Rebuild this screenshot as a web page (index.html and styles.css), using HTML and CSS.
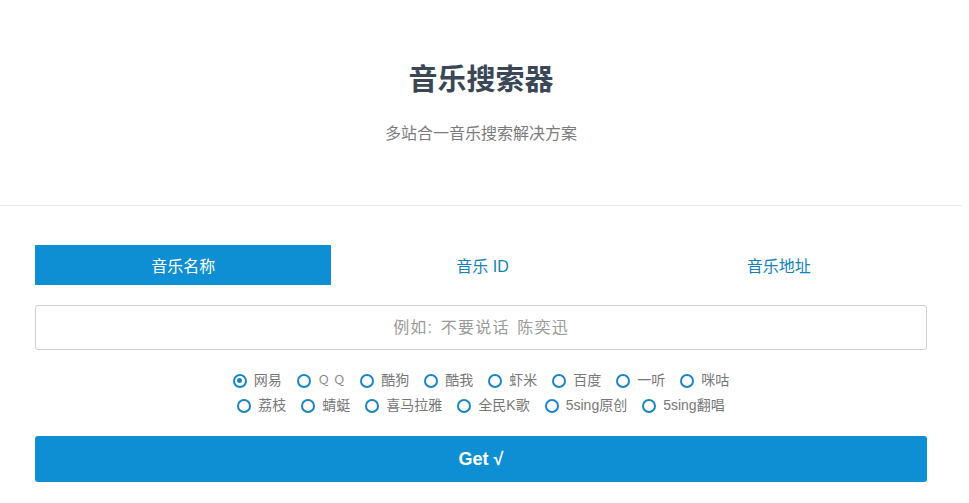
FILE: index.html
```html
<!DOCTYPE html>
<html lang="zh-CN">
<head>
    <meta charset="UTF-8">
    <meta name="viewport" content="width=device-width, initial-scale=1.0">
    <title>音乐搜索器</title>
    <link rel="stylesheet" href="styles.css">
</head>
<body>
    <div class="page">
        <header class="header">
            <h1>音乐搜索器</h1>
            <p>多站合一音乐搜索解决方案</p>
        </header>

        <div class="container">
            <div class="tabs">
                <div class="tab active">音乐名称</div>
                <div class="tab">音乐 ID</div>
                <div class="tab">音乐地址</div>
            </div>

            <input type="text" class="search-input" placeholder="例如: 不要说话 陈奕迅">

            <div class="sources">
                <div class="source-row">
                    <label class="radio checked"><span class="dot"></span>网易</label>
                    <label class="radio"><span class="dot"></span><span class="qq">Ｑ Ｑ</span></label>
                    <label class="radio"><span class="dot"></span>酷狗</label>
                    <label class="radio"><span class="dot"></span>酷我</label>
                    <label class="radio"><span class="dot"></span>虾米</label>
                    <label class="radio"><span class="dot"></span>百度</label>
                    <label class="radio"><span class="dot"></span>一听</label>
                    <label class="radio"><span class="dot"></span>咪咕</label>
                </div>
                <div class="source-row">
                    <label class="radio"><span class="dot"></span>荔枝</label>
                    <label class="radio"><span class="dot"></span>蜻蜓</label>
                    <label class="radio"><span class="dot"></span>喜马拉雅</label>
                    <label class="radio"><span class="dot"></span>全民K歌</label>
                    <label class="radio"><span class="dot"></span>5sing原创</label>
                    <label class="radio"><span class="dot"></span>5sing翻唱</label>
                </div>
            </div>

            <button class="get-button">Get √</button>
        </div>
    </div>
</body>
</html>
```

FILE: styles.css
```css
body {
    margin: 0;
    padding: 0;
    background: #fff;
    font-family: 'Liberation Sans', Arial, 'Noto Sans CJK SC', sans-serif;
    color: #333;
}

.page {
    width: 962px;
}

.header {
    text-align: center;
    padding: 62px 0 0;
    height: 143px;
    border-bottom: 1px solid #eaeaea;
}

.header h1 {
    margin: 0;
    font-size: 29px;
    line-height: 36px;
    font-weight: bold;
    color: #3a4756;
}

.header p {
    margin: 24px 0 0;
    font-size: 16px;
    line-height: 24px;
    color: #7b7b7b;
}

.container {
    padding: 39px 35px 0;
}

.tabs {
    display: flex;
    height: 40px;
}

.tab {
    flex: 1;
    display: flex;
    justify-content: center;
    align-items: center;
    font-size: 16px;
    color: #1282be;
}

.tab.active {
    background: #0f8fd3;
    color: #fff;
    margin-right: 3px;
}

.search-input {
    display: block;
    box-sizing: border-box;
    width: 100%;
    height: 45px;
    margin-top: 20px;
    padding: 0;
    border: 1px solid #cfcfcf;
    border-radius: 3px;
    text-align: center;
    font-family: inherit;
    font-size: 16px;
    letter-spacing: 1.2px;
    word-spacing: 2px;
    outline: none;
}

.search-input::placeholder {
    color: #9a9a9a;
}

.sources {
    margin-top: 18px;
}

.source-row {
    display: flex;
    justify-content: center;
    gap: 15px;
    line-height: 25px;
}

.radio {
    display: flex;
    align-items: center;
    font-size: 14px;
    color: #777;
}

.dot {
    box-sizing: border-box;
    width: 14px;
    height: 14px;
    border: 2.5px solid #1a85c6;
    border-radius: 50%;
    margin-right: 7px;
    position: relative;
}

.radio.checked .dot::after {
    content: "";
    position: absolute;
    top: 2px;
    left: 2px;
    width: 5px;
    height: 5px;
    border-radius: 50%;
    background: #1a85c6;
}

.qq {
    font-size: 12px;
    color: #888;
}

.get-button {
    display: block;
    width: 100%;
    height: 46px;
    margin-top: 18px;
    border: none;
    border-radius: 3px;
    background: #0f8fd3;
    color: #fff;
    font-family: 'Liberation Sans', Arial, sans-serif;
    font-size: 18px;
    font-weight: bold;
    cursor: pointer;
}
```
